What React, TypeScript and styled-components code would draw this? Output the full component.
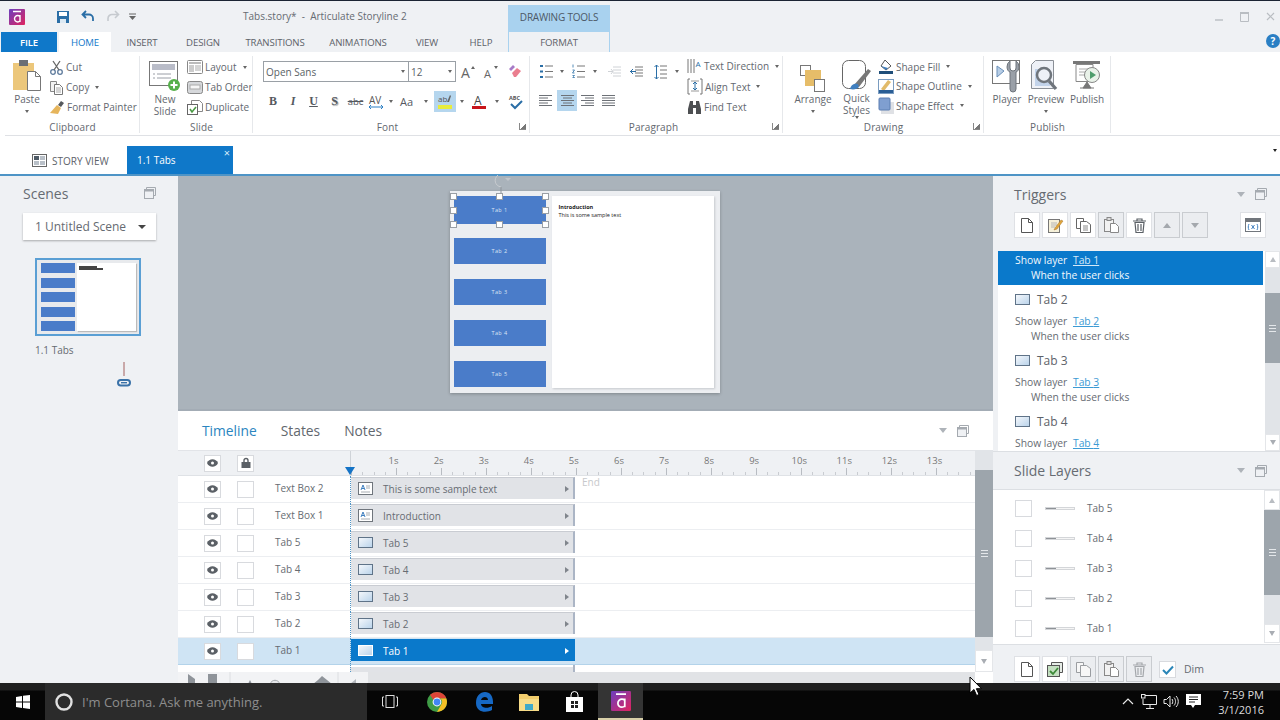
import React from 'react';
import styled, { createGlobalStyle } from 'styled-components';

const GlobalStyle = createGlobalStyle`
  html, body { margin: 0; padding: 0; background: #eff1f4; overflow: hidden; }
  * { box-sizing: border-box; }
  svg { display: block; flex: none; overflow: visible; }
`;

const font = '"Open Sans", "Liberation Sans", sans-serif';
const Blue = '#0f78c9';
const TextGrey = '#5a5f66';

const Shell = styled.div`
  width: 1280px;
  height: 720px;
  display: flex;
  flex-direction: column;
  overflow: hidden;
  position: relative;
  font-family: ${font};
  color: ${TextGrey};
  background: #eff1f4;
  border-top: 1px solid #1b2433;
`;

const TitleBar = styled.div`
  height: 31px;
  display: flex;
  align-items: flex-end;
  flex: none;
`;
const Qat = styled.div`
  width: 243px;
  height: 31px;
  display: flex;
  align-items: center;
  padding-left: 9px;
`;
const QatSlot = styled.div<{ $w: number }>`
  width: ${(p) => p.$w}px;
  display: flex;
  justify-content: center;
  flex: none;
`;
const DocTitle = styled.div`
  width: 265px;
  height: 31px;
  line-height: 31px;
  font-size: 10px;
  white-space: pre;
  color: #666b72;
`;
const ContextHead = styled.div`
  width: 102px;
  height: 27px;
  background: #a9d2ef;
  text-align: center;
  line-height: 24px;
  font-size: 10px;
  letter-spacing: -0.2px;
  color: #4c5866;
`;
const WinControls = styled.div`
  margin-left: auto;
  height: 31px;
  display: flex;
  align-items: center;
  gap: 17px;
  padding-right: 5px;
`;

const TabsRow = styled.div`
  height: 20px;
  display: flex;
  flex: none;
  padding-left: 1px;
  position: relative;
`;
const RibbonTab = styled.div<{ $w: number; $kind?: 'file' | 'active' | 'format' }>`
  width: ${(p) => p.$w}px;
  text-align: center;
  line-height: 21px;
  font-size: 9.6px;
  letter-spacing: -0.1px;
  margin-left: ${(p) => (p.$kind === 'active' ? '2px' : p.$kind === 'format' ? '1px' : '0')};
  background: ${(p) => (p.$kind === 'file' ? Blue : p.$kind === 'active' ? '#fff' : 'transparent')};
  color: ${(p) => (p.$kind === 'file' ? '#fff' : p.$kind === 'active' ? Blue : '#5d6269')};
  font-weight: ${(p) => (p.$kind === 'file' ? 600 : 400)};
  border-left: ${(p) => (p.$kind === 'format' ? '1px solid #a9d2ef' : '0')};
  border-right: ${(p) => (p.$kind === 'format' ? '1px solid #a9d2ef' : '0')};
`;
const HelpDot = styled.div`
  margin-left: auto;
  margin-top: 2px;
  width: 14px;
  height: 14px;
  border-radius: 50%;
  background: #2a7fc4;
  color: #fff;
  font-size: 10px;
  font-weight: 700;
  line-height: 14px;
  text-align: center;
`;

const Ribbon = styled.div`
  height: 84px;
  flex: none;
  background: #fff;
  display: flex;
  padding-left: 5px;
  position: relative;
  &::after {
    content: '';
    position: absolute;
    left: 5px;
    right: 0;
    bottom: 0;
    height: 1px;
    background: #dfe1e5;
  }
`;
const Group = styled.div<{ $w: number }>`
  width: ${(p) => p.$w}px;
  height: 83px;
  display: flex;
  flex-direction: column;
  position: relative;
  flex: none;
  &::after {
    content: '';
    position: absolute;
    right: 0;
    top: 4px;
    bottom: 2px;
    width: 1px;
    background: #e6e8eb;
  }
`;
const GroupBody = styled.div<{ $pl?: number; $gap?: number }>`
  height: 67px;
  display: flex;
  padding-left: ${(p) => p.$pl ?? 0}px;
  gap: ${(p) => p.$gap ?? 0}px;
`;
const GroupLabel = styled.div<{ $shift?: number }>`
  height: 16px;
  line-height: 17px;
  text-align: center;
  font-size: 10px;
  letter-spacing: 0.1px;
  color: #63686f;
  transform: translateX(${(p) => p.$shift ?? 0}px);
`;
const Launcher = styled.div`
  position: absolute;
  right: 4px;
  bottom: 5px;
  width: 7px;
  height: 7px;
  border-left: 1px solid #888;
  border-bottom: 1px solid #888;
  background: linear-gradient(135deg, transparent 55%, #777 55%);
`;
const BigButton = styled.div<{ $w: number }>`
  width: ${(p) => p.$w}px;
  display: flex;
  flex-direction: column;
  align-items: center;
  padding-top: 7px;
  font-size: 10px;
  line-height: 12px;
  text-align: center;
  color: #63686f;
  flex: none;
`;
const BigIcon = styled.div`
  height: 33px;
  margin-bottom: 1px;
  display: flex;
  align-items: flex-end;
  justify-content: center;
`;
const Caret = styled.span`
  display: inline-block;
  width: 0;
  height: 0;
  border-left: 2.5px solid transparent;
  border-right: 2.5px solid transparent;
  border-top: 3px solid #666;
  vertical-align: middle;
  flex: none;
`;
const BigCaret = styled(Caret)`
  margin-top: 5px;
`;
const SmallColumn = styled.div<{ $top?: number; $rowH?: number }>`
  display: flex;
  flex-direction: column;
  padding-top: ${(p) => p.$top ?? 5}px;
  & > * {
    height: ${(p) => p.$rowH ?? 20}px;
  }
`;
const SmallButton = styled.div`
  display: flex;
  align-items: center;
  gap: 2px;
  font-size: 10px;
  color: #63686f;
  white-space: nowrap;
`;
const SmallCaret = styled(Caret)`
  margin-left: 4px;
`;
const FontColumn = styled.div`
  display: flex;
  flex-direction: column;
  padding: 9px 0 0 6px;
  gap: 9px;
`;
const FontRow = styled.div`
  display: flex;
  align-items: center;
  height: 21px;
`;
const Combo = styled.div<{ $w: number }>`
  width: ${(p) => p.$w}px;
  height: 21px;
  border: 1px solid #9aa0a6;
  margin-right: -1px;
  display: flex;
  align-items: center;
  justify-content: space-between;
  padding: 0 3px 0 2px;
  font-size: 10px;
  color: #5a5f66;
  flex: none;
`;
const Slot = styled.div<{ $w: number; $on?: boolean }>`
  width: ${(p) => p.$w}px;
  height: 21px;
  flex: none;
  display: flex;
  align-items: center;
  justify-content: center;
  background: ${(p) => (p.$on ? '#b5d6ee' : 'transparent')};
  font-size: 11px;
  color: #55595f;
`;
const Bold = styled.span<{ $under?: boolean; $italic?: boolean; $shadow?: boolean }>`
  font-family: "Liberation Serif", serif;
  font-weight: 700;
  font-size: 12px;
  font-style: ${(p) => (p.$italic ? 'italic' : 'normal')};
  text-decoration: ${(p) => (p.$under ? 'underline' : 'none')};
  text-shadow: ${(p) => (p.$shadow ? '1px 1px 1px #999' : 'none')};
`;
const Strike = styled.span`
  font-size: 9.5px;
  text-decoration: line-through;
`;
const ParaColumn = styled.div`
  width: 157px;
  flex: none;
  display: flex;
  flex-direction: column;
  padding: 9px 0 0 9px;
  gap: 8px;
`;

const DocRow = styled.div`
  height: 40px;
  flex: none;
  background: #fff;
  display: flex;
  align-items: flex-end;
  border-bottom: 2px solid #4e94c6;
  position: relative;
`;
const StoryTab = styled.div`
  width: 127px;
  height: 27px;
  padding-left: 32px;
  display: flex;
  align-items: center;
  gap: 5px;
  font-size: 10px;
  color: #5d6269;
`;
const SlideTab = styled.div`
  width: 106px;
  height: 28px;
  background: ${Blue};
  color: #fff;
  font-size: 10px;
  line-height: 28px;
  padding-left: 10px;
  position: relative;
`;
const TabClose = styled.span`
  position: absolute;
  right: 3px;
  top: -7px;
  font-size: 11px;
  color: #d8ecfa;
`;
const DocMenu = styled.div`
  margin-left: auto;
  margin-right: 3px;
  margin-bottom: 14px;
`;
const DocCaret = styled(Caret)`
  border-top-color: #222;
`;

const Main = styled.div`
  flex: 1;
  display: flex;
  min-height: 0;
`;

const ScenesPanel = styled.div`
  width: 178px;
  flex: none;
  padding: 6px 22px 0 23px;
  display: flex;
  flex-direction: column;
`;
const PanelHead = styled.div`
  display: flex;
  align-items: center;
  justify-content: space-between;
  font-size: 14px;
  color: #666b72;
  height: 22px;
`;
const PanelTools = styled.div`
  display: flex;
  align-items: center;
  gap: 10px;
`;
const TimelineTools = styled(PanelTools)`
  margin-left: auto;
`;
const SceneSelect = styled.div`
  height: 27px;
  width: 133px;
  margin-top: 9px;
  background: #fff;
  box-shadow: 0 1px 2px rgba(0, 0, 0, 0.3);
  display: flex;
  align-items: center;
  justify-content: space-between;
  padding: 0 10px 0 12px;
  font-size: 12px;
  color: #666b72;
`;
const SelectCaret = styled(Caret)`
  border-left-width: 4px;
  border-right-width: 4px;
  border-top: 4px solid #444;
`;
const Thumb = styled.div`
  width: 106px;
  height: 78px;
  margin: 18px 0 0 12px;
  border: 2px solid #5a9fd4;
  background: #e8eaed;
  padding: 3px 3px 3px 4px;
  display: flex;
  gap: 2px;
`;
const ThumbTabs = styled.div`
  width: 34px;
  display: flex;
  flex-direction: column;
  justify-content: space-between;
`;
const ThumbTab = styled.div`
  height: 10px;
  background: #4a7cc9;
`;
const ThumbPage = styled.div`
  flex: 1;
  background: #fff;
  padding: 3px 2px;
  box-shadow: 1px 1px 1px #bbb;
`;
const ThumbText = styled.div<{ $w: number }>`
  width: ${(p) => p.$w}px;
  height: 2px;
  background: #444;
`;
const ThumbLabel = styled.div`
  margin: 7px 0 0 12px;
  font-size: 10px;
  color: #666b72;
`;
const LinkMark = styled.div`
  margin: 5px 0 0 94px;
`;

const Center = styled.div`
  width: 815px;
  flex: none;
  display: flex;
  flex-direction: column;
  min-height: 0;
`;
const Stage = styled.div`
  height: 235px;
  flex: none;
  background: #aab3bb;
  border-bottom: 2px solid #a3acb5;
  display: flex;
  justify-content: center;
  padding: 15px 2px 0 0;
`;
const SlideSheet = styled.div`
  width: 270px;
  height: 202px;
  background: #eceef1;
  box-shadow: 0 1px 3px rgba(0, 0, 0, 0.25);
  padding: 5px 6px 5px 4px;
  display: flex;
  gap: 6px;
  position: relative;
`;
const SlideTabs = styled.div`
  width: 92px;
  display: flex;
  flex-direction: column;
  gap: 15px;
`;
const SlideButton = styled.div<{ $first?: boolean }>`
  height: ${(p) => (p.$first ? 28 : 26)}px;
  margin-bottom: ${(p) => (p.$first ? -1 : 0)}px;
  background: #4a7cc9;
  color: #dbe5f5;
  font-size: 5.5px;
  display: flex;
  align-items: center;
  justify-content: center;
  letter-spacing: 0.4px;
  position: relative;
`;
const Handle = styled.span<{ $x: number; $y: number }>`
  position: absolute;
  left: ${(p) => p.$x}%;
  top: ${(p) => p.$y}%;
  width: 7px;
  height: 7px;
  margin: -3.5px 0 0 -3.5px;
  background: #fff;
  border: 1.5px solid #9a9fa5;
`;
const RotateMark = styled.div`
  position: absolute;
  left: 42px;
  top: -17px;
`;
const SlidePage = styled.div`
  flex: 1;
  background: #fff;
  box-shadow: 1px 1px 2px #c6c9cd;
  padding: 7px;
  font-size: 5.5px;
  line-height: 8px;
  color: #222;
`;
const SlideStrong = styled.div`
  font-weight: 700;
`;

const Timeline = styled.div`
  flex: 1;
  display: flex;
  flex-direction: column;
  background: #fff;
  min-height: 0;
  overflow: hidden;
`;
const TimelineTabs = styled.div`
  height: 39px;
  flex: none;
  display: flex;
  align-items: center;
  padding: 0 24px 0 24px;
  gap: 24px;
`;
const TimelineTab = styled.div<{ $on?: boolean }>`
  font-size: 13.8px;
  color: ${(p) => (p.$on ? '#2a85c0' : '#62676e')};
`;
const TimelineBody = styled.div`
  flex: 1;
  display: flex;
  min-height: 0;
`;
const TimelineGrid = styled.div`
  width: 797px;
  flex: none;
  display: flex;
  flex-direction: column;
`;
const RulerRow = styled.div`
  height: 26px;
  flex: none;
  display: flex;
  background: #eff1f4;
  border-top: 1px solid #e2e4e8;
  border-bottom: 1px solid #dfe2e6;
`;
const LayerCols = styled.div`
  width: 172px;
  flex: none;
  display: flex;
  align-items: center;
  padding-left: 26px;
  font-size: 10px;
  color: #666b72;
`;
const ToggleBox = styled.div`
  width: 17px;
  height: 17px;
  border: 1px solid #d8dade;
  background: #fff;
  display: flex;
  align-items: center;
  justify-content: center;
  flex: none;
`;
const LockBox = styled(ToggleBox)`
  margin-left: 16px;
`;
const LayerName = styled.div`
  margin: 0 0 2px 21px;
`;
const Ruler = styled.div`
  flex: 1;
  position: relative;
  display: flex;
  padding-left: 20px;
  border-left: 1px solid #cfd3d8;
  font-size: 9.5px;
  color: #777;
  background-image:
    repeating-linear-gradient(90deg, #b8bcc2 0 1px, transparent 1px 45px),
    repeating-linear-gradient(90deg, #c9ccd1 0 1px, transparent 1px 11.25px);
  background-size: 100% 7px, 100% 3px;
  background-position: 0 100%, 0 100%;
  background-repeat: no-repeat;
`;
const RulerMark = styled.div`
  width: 45.08px;
  flex: none;
  text-align: center;
  padding-top: 3px;
  line-height: 13px;
`;
const Playhead = styled.div`
  position: absolute;
  left: -6px;
  bottom: 0;
  width: 0;
  height: 0;
  border-left: 5.5px solid transparent;
  border-right: 5.5px solid transparent;
  border-top: 8px solid #1473c6;
`;
const Row = styled.div<{ $on?: boolean }>`
  height: 27px;
  flex: none;
  display: flex;
  background: ${(p) => (p.$on ? '#cfe4f4' : '#fff')};
  border-bottom: 1px solid ${(p) => (p.$on ? '#b3d3ea' : '#eceef1')};
`;
const Track = styled.div`
  flex: 1;
  position: relative;
  border-left: 1px dotted #4e94c6;
  display: flex;
  align-items: flex-start;
  padding-top: 1px;
`;
const EndMark = styled.span`
  position: absolute;
  left: 231px;
  top: -1px;
  font-size: 10px;
  color: #c7c9cc;
`;
const Bar = styled.div<{ $on?: boolean }>`
  width: 224px;
  height: 22px;
  background: ${(p) => (p.$on ? '#0a79cb' : '#e1e3e7')};
  border-top: 1px solid ${(p) => (p.$on ? '#0a79cb' : '#c9ccd2')};
  border-right: 2px solid ${(p) => (p.$on ? '#0a79cb' : '#abb5c5')};
  display: flex;
  align-items: center;
  padding: 0 4px 0 7px;
  color: ${(p) => (p.$on ? '#fff' : '#676c73')};
  font-size: 10px;
  gap: 10px;
`;
const BarArrow = styled.span<{ $on?: boolean }>`
  margin-left: auto;
  width: 0;
  height: 0;
  border-top: 3.5px solid transparent;
  border-bottom: 3.5px solid transparent;
  border-left: 4px solid ${(p) => (p.$on ? '#fff' : '#80858c')};
`;
const StubRow = styled.div`
  height: 7px;
  flex: none;
  display: flex;
`;
const StubBar = styled.div`
  margin-left: 172px;
  width: 225px;
  border-left: 1px dotted #4e94c6;
  border-right: 2px solid #abb5c5;
  background: linear-gradient(#fff 2px, #e1e3e7 2px);
`;
const TimelineFoot = styled.div`
  flex: 1;
  display: flex;
  min-height: 12px;
`;
const FootTools = styled.div`
  width: 190px;
  flex: none;
  background: #f2f3f5;
`;
const FootTrack = styled.div`
  flex: 1;
  background: #e1e3e6;
`;

const Scroll = styled.div<{ $w: number }>`
  width: ${(p) => p.$w}px;
  flex: none;
  display: flex;
  flex-direction: column;
  background: #e1e4e8;
`;
const ScrollArrow = styled.div<{ $h: number; $up?: boolean }>`
  height: ${(p) => p.$h}px;
  flex: none;
  background: #fff;
  border: 1px solid #e4e6e9;
  display: flex;
  align-items: center;
  justify-content: center;
  &::after {
    content: '';
    width: 0;
    height: 0;
    border-left: 3.5px solid transparent;
    border-right: 3.5px solid transparent;
    ${(p) => (p.$up ? 'border-bottom: 5px solid #b9bdc2;' : 'border-top: 5px solid #a9adb3;')}
  }
`;
const ScrollGap = styled.div<{ $h: number }>`
  height: ${(p) => p.$h}px;
  flex: none;
`;
const ScrollEnd = styled.div`
  flex: 1;
  background: #fff;
`;
const ScrollThumb = styled.div<{ $h: number }>`
  height: ${(p) => p.$h}px;
  flex: none;
  background: #9da5ac;
  display: flex;
  align-items: center;
  justify-content: center;
  &::after {
    content: '';
    width: 7px;
    height: 5px;
    border-top: 1px solid #e4e7ea;
    border-bottom: 1px solid #e4e7ea;
    background: linear-gradient(#e4e7ea, #e4e7ea) center / 100% 1px no-repeat;
  }
`;

const RightPanel = styled.div`
  width: 287px;
  flex: none;
  display: flex;
  flex-direction: column;
  background: #eff1f4;
  min-height: 0;
`;
const RightHead = styled(PanelHead)`
  padding: 0 13px 0 21px;
  height: 38px;
  flex: none;
`;
const TriggersHead = styled(RightHead)`
  height: 36px;
`;
const ToolRow = styled.div`
  height: 39px;
  flex: none;
  display: flex;
  padding: 0 0 0 21px;
  gap: 2px;
`;
const ToolButton = styled.div<{ $off?: boolean; $push?: number }>`
  width: 26px;
  height: 26px;
  background: ${(p) => (p.$off ? '#ebedf0' : '#fff')};
  border: 1px solid ${(p) => (p.$off ? '#c9ccd0' : '#dfe1e5')};
  display: flex;
  align-items: center;
  justify-content: center;
  margin-left: ${(p) => p.$push ?? 0}px;
  flex: none;
`;
const TriggerBody = styled.div`
  height: 200px;
  flex: none;
  display: flex;
  padding-left: 5px;
`;
const TriggerList = styled.div`
  width: 267px;
  background: #fff;
  overflow: hidden;
  font-size: 10.3px;
  color: #666b72;
`;
const TriggerItem = styled.div<{ $on?: boolean }>`
  height: 34px;
  padding: 2px 0 0 17px;
  margin-right: 2px;
  line-height: 15px;
  background: ${(p) => (p.$on ? '#0a79cb' : 'transparent')};
  color: ${(p) => (p.$on ? '#f2f8fd' : '#666b72')};
`;
const TriggerLink = styled.span<{ $on?: boolean }>`
  text-decoration: underline;
  color: ${(p) => (p.$on ? '#d5e9f8' : '#3b9ad4')};
  margin-left: 3px;
`;
const TriggerWhen = styled.div`
  padding-left: 16px;
`;
const TriggerGroup = styled.div`
  height: 27px;
  display: flex;
  align-items: center;
  padding: 2px 0 0 17px;
  gap: 7px;
  font-size: 12px;
  color: #5d6269;
`;
const LayersHead = styled(RightHead)`
  border-top: 1px solid #dcdfe3;
  height: 39px;
  border-bottom: 1px solid #dcdfe3;
`;
const LayersBody = styled.div`
  height: 155px;
  flex: none;
  display: flex;
  padding-left: 4px;
  background: #fff;
  border-bottom: 1px solid #dcdfe3;
`;
const LayersList = styled.div`
  width: 267px;
  padding: 3px 0 0 18px;
`;
const LayerRow = styled.div`
  height: 30px;
  display: flex;
  align-items: center;
  font-size: 10px;
  color: #666b72;
`;
const LayerCheck = styled.div`
  width: 17px;
  height: 17px;
  background: #fff;
  border: 1px solid #d8dade;
  flex: none;
`;
const OpacityTrack = styled.div`
  width: 30px;
  height: 3px;
  margin: 0 12px 0 13px;
  border: 1px solid #d4d6d9;
  background: linear-gradient(90deg, #8e9297 0 10px, #f5f5f5 10px);
  flex: none;
`;
const LayersFoot = styled.div`
  flex: 1;
  display: flex;
  padding: 11px 0 0 21px;
  gap: 2px;
  align-items: flex-start;
`;
const DimCheck = styled(LayerCheck)`
  margin: 5px 6px 0 5px;
  display: flex;
  align-items: center;
  justify-content: center;
`;
const DimLabel = styled.span`
  font-size: 10.5px;
  line-height: 27px;
  color: #666b72;
`;

const Taskbar = styled.div`
  height: 37px;
  flex: none;
  background: linear-gradient(#1f1f1f 0 7px, #060606 8px);
  display: flex;
  align-items: center;
  position: relative;
  color: #e8e8e8;
`;
const StartSlot = styled.div`
  width: 45px;
  height: 37px;
  display: flex;
  align-items: center;
  justify-content: center;
`;
const CortanaBox = styled.div`
  width: 322px;
  height: 37px;
  background: #2b2b2b;
  display: flex;
  align-items: center;
  padding-left: 9px;
  gap: 8px;
  font-size: 13px;
  color: #8e8e8e;
`;
const TaskSlot = styled.div<{ $w: number; $active?: boolean }>`
  width: ${(p) => p.$w}px;
  height: 37px;
  flex: none;
  display: flex;
  align-items: center;
  justify-content: center;
  background: ${(p) => (p.$active ? '#343434' : 'transparent')};
  border-bottom: ${(p) => (p.$active ? '2px solid #d8cfa8' : '0')};
`;
const Tray = styled.div`
  margin-left: auto;
  display: flex;
  align-items: center;
  gap: 7px;
  padding-right: 16px;
`;
const Clock = styled.div`
  font-size: 11px;
  line-height: 15px;
  text-align: right;
  color: #dcdcdc;
  margin-left: 10px;
`;
const Pointer = styled.div`
  position: absolute;
  left: 969px;
  top: 675px;
`;

/* ---- icons ---- */
const AppLogo = ({ size = 16 }: { size?: number }) => (
  <svg width={size} height={size} viewBox="0 0 16 16">
    <defs>
      <linearGradient id="lg" x1="0" y1="0" x2="1" y2="1">
        <stop offset="0" stopColor="#6a3fc0" />
        <stop offset="1" stopColor="#e0245e" />
      </linearGradient>
    </defs>
    <rect width="16" height="16" rx="1" fill="url(#lg)" />
    <path d="M4 2.5h8M11 7.5a3.2 3.2 0 1 0 0 4.5M11 6v7" stroke="#fff" strokeWidth="1.4" fill="none" />
  </svg>
);
const SaveIcon = () => (
  <svg width="14" height="14" viewBox="0 0 14 14">
    <rect x="1" y="1" width="12" height="12" fill="#2a6ea6" />
    <rect x="3" y="2" width="8" height="4" fill="#fff" />
    <rect x="4" y="9" width="6" height="4" fill="#dce9f3" />
  </svg>
);
const UndoIcon = ({ color = '#2a6ea6' }: { color?: string }) => (
  <svg width="14" height="13" viewBox="0 0 14 13">
    <path d="M5 1L1.5 4.5 5 8M2 4.5h6a4 4 0 0 1 4 4V11" fill="none" stroke={color} strokeWidth="1.8" />
  </svg>
);
const RedoIcon = () => (
  <svg width="14" height="13" viewBox="0 0 14 13">
    <path d="M9 1l3.5 3.5L9 8M12 4.5H6a4 4 0 0 0-4 4V11" fill="none" stroke="#c6cacf" strokeWidth="1.6" />
  </svg>
);
const QatMenu = () => (
  <svg width="7" height="7" viewBox="0 0 7 7">
    <path d="M0 1h7" stroke="#666" />
    <path d="M0 3h7L3.5 7z" fill="#666" />
  </svg>
);
const PasteIcon = () => (
  <svg width="30" height="33" viewBox="0 0 30 33">
    <rect x="1" y="4" width="21" height="27" fill="#ecc77b" />
    <rect x="7" y="1" width="9" height="6" fill="#6b6f75" />
    <path d="M15.5 12.5h8l5 5v14h-13z" fill="#fff" stroke="#777" />
    <path d="M23.5 12.5v5h5" fill="none" stroke="#777" />
  </svg>
);
const CutIcon = () => (
  <svg width="15" height="15" viewBox="0 0 15 15">
    <circle cx="4" cy="12" r="2.3" fill="none" stroke="#5d7a9c" strokeWidth="1.3" />
    <circle cx="11" cy="12" r="2.3" fill="none" stroke="#5d7a9c" strokeWidth="1.3" />
    <path d="M5 10L11 1M10 10L4 1" stroke="#666" strokeWidth="1.3" />
  </svg>
);
const CopyIcon = () => (
  <svg width="15" height="15" viewBox="0 0 15 15">
    <path d="M1.5 1.5h6v10h-6z" fill="#f3f3f3" stroke="#888" />
    <path d="M5.5 4.5h5l3 3v7h-8z" fill="#fff" stroke="#777" />
    <path d="M7 8h5M7 10h5M7 12h5" stroke="#aaa" />
  </svg>
);
const BrushIcon = () => (
  <svg width="16" height="15" viewBox="0 0 16 15">
    <path d="M9 5l3-4 3 2-3 4z" fill="#55585c" />
    <path d="M1 13l7-8 4 3-3 6z" fill="#e6b55c" />
  </svg>
);
const NewSlideIcon = () => (
  <svg width="32" height="31" viewBox="0 0 32 31">
    <rect x=".5" y=".5" width="28" height="24" fill="#fff" stroke="#777" />
    <rect x="3" y="3" width="23" height="6" fill="#b9bcc8" />
    <path d="M4 13h2M8 13h14M4 17h2M8 17h14" stroke="#9a9ea6" />
    <circle cx="25" cy="24" r="6" fill="#57b04c" />
    <path d="M25 20.5v7M21.5 24h7" stroke="#fff" strokeWidth="2" />
  </svg>
);
const LayoutIcon = () => (
  <svg width="16" height="15" viewBox="0 0 16 15">
    <rect x=".5" y=".5" width="15" height="13" rx="1" fill="#fff" stroke="#888" />
    <rect x="2" y="2" width="12" height="2" fill="#bbb" />
    <rect x="2" y="5" width="5" height="7" fill="#ccc" />
    <path d="M8 6h6M8 8h6M8 10h6" stroke="#aaa" />
  </svg>
);
const TabOrderIcon = () => (
  <svg width="16" height="15" viewBox="0 0 16 15">
    <rect x=".5" y="1.5" width="15" height="12" rx="2" fill="#d6d8db" stroke="#888" />
    <rect x="3" y="5" width="10" height="4" fill="#f6f6f6" stroke="#aaa" />
  </svg>
);
const DuplicateIcon = () => (
  <svg width="16" height="15" viewBox="0 0 16 15">
    <path d="M4.5.5h8l3 3v8h-11z" fill="#fff" stroke="#888" />
    <rect x=".5" y="4.5" width="10" height="10" fill="#fff" stroke="#666" />
    <path d="M3 9l2 3 4-5" fill="none" stroke="#4a9a44" strokeWidth="1.6" />
  </svg>
);
const GrowA = ({ down }: { down?: boolean }) => (
  <svg width="17" height="17" viewBox="0 0 17 17">
    <text x="1" y="15" fontSize={down ? 11 : 14} fill="#666" fontFamily="Open Sans">A</text>
    <path d={down ? 'M11 3h4l-2 3z' : 'M11 6h4l-2-3z'} fill="#666" />
  </svg>
);
const EraserIcon = () => (
  <svg width="15" height="15" viewBox="0 0 15 15">
    <path d="M2 5l4-4 2 2-4 4z" fill="#a77bc7" />
    <path d="M5 9l5-5 4 3-5 6H7z" fill="#ea7e8f" />
  </svg>
);
const AvIcon = () => (
  <svg width="17" height="16" viewBox="0 0 17 16">
    <text x="1" y="10" fontSize="10" fill="#555" fontFamily="Open Sans">AV</text>
    <path d="M1 13h14M3 11l-2 2 2 2M13 11l2 2-2 2" fill="none" stroke="#2a7fc4" />
  </svg>
);
const HighlightIcon = () => (
  <svg width="16" height="17" viewBox="0 0 16 17">
    <text x="1" y="9" fontSize="8" fill="#555" fontFamily="Open Sans">ab</text>
    <path d="M10 9l3-7 1 1-2 6z" fill="#666" />
    <rect x="1" y="12" width="14" height="4" fill="#e8ec3c" />
  </svg>
);
const ColorAIcon = () => (
  <svg width="16" height="17" viewBox="0 0 16 17">
    <text x="3" y="12" fontSize="12" fill="#444" fontFamily="Open Sans">A</text>
    <rect x="1" y="13" width="14" height="3" fill="#c8151b" />
  </svg>
);
const SpellIcon = () => (
  <svg width="15" height="16" viewBox="0 0 15 16">
    <text x="0" y="6" fontSize="5.5" fontWeight="700" fill="#555" fontFamily="Open Sans">ABC</text>
    <path d="M2 10l4 4 7-7" fill="none" stroke="#2a6ea6" strokeWidth="2" />
  </svg>
);
const BulletsIcon = ({ numbered }: { numbered?: boolean }) => (
  <svg width="13" height="15" viewBox="0 0 13 15">
    <path d="M5 2h8M5 7.5h8M5 13h8" stroke="#777" />
    {numbered ? (
      <path d="M1 .5v3M.5 6h2l-2 3h2M.5 11.5h2l-1 1 1 1h-2" fill="none" stroke="#2a6ea6" strokeWidth=".8" />
    ) : (
      <path d="M0 2h3M0 7.5h3M0 13h3" stroke="#2a6ea6" strokeWidth="2" />
    )}
  </svg>
);
const IndentIcon = ({ off }: { off?: boolean }) => (
  <svg width="13" height="11" viewBox="0 0 13 11">
    <path d="M5 1h8M5 4h8M5 7h8M5 10h8" stroke={off ? '#cfd2d6' : '#777'} />
    <path d={off ? 'M0 5.5h5M3 3l2 2.5L3 8' : 'M0 5.5h6M3 3L.5 5.5 3 8'} fill="none" stroke={off ? '#cfd2d6' : '#2a6ea6'} />
  </svg>
);
const LineSpaceIcon = () => (
  <svg width="13" height="16" viewBox="0 0 13 16">
    <path d="M6 2h7M6 6h7M6 10h7M6 14h7" stroke="#777" />
    <path d="M2.5 1v14M.5 3l2-2 2 2M.5 13l2 2 2-2" fill="none" stroke="#2a6ea6" />
  </svg>
);
const AlignIcon = ({ mode }: { mode: 'l' | 'c' | 'r' | 'j' }) => {
  const w = [13, 9, 13, 9, 13];
  return (
    <svg width="13" height="11" viewBox="0 0 13 11">
      {w.map((n, i) => {
        const len = mode === 'j' ? 13 : n;
        const x = mode === 'l' || mode === 'j' ? 0 : mode === 'c' ? (13 - len) / 2 : 13 - len;
        return <path key={i} d={`M${x} ${0.5 + i * 2.5}h${len}`} stroke="#6d7177" />;
      })}
    </svg>
  );
};
const TextDirIcon = () => (
  <svg width="15" height="16" viewBox="0 0 15 16">
    <path d="M1 1v14M4 1v14M7 1v14" stroke="#777" />
    <text x="8.5" y="9" fontSize="8" fill="#2a6ea6" fontFamily="Open Sans">A</text>
  </svg>
);
const AlignTextIcon = () => (
  <svg width="16" height="17" viewBox="0 0 16 17">
    <path d="M3 1H1v15h2M13 1h2v15h-2" fill="none" stroke="#777" />
    <path d="M4 3h8M4 13h8" stroke="#999" />
    <path d="M8 5v7M6 6l2-2 2 2M6 10l2 2 2-2" fill="none" stroke="#2a6ea6" />
  </svg>
);
const BinocularIcon = () => (
  <svg width="15" height="13" viewBox="0 0 15 13">
    <path d="M3 0h3v4h3V0h3l2 8v5H9V7H6v6H1V8z" fill="#4d4f52" />
  </svg>
);
const ArrangeIcon = () => (
  <svg width="26" height="27" viewBox="0 0 26 27">
    <rect x=".5" y=".5" width="10" height="10" fill="#fff" stroke="#777" />
    <rect x="5" y="5" width="16" height="16" fill="#e6bd69" />
    <rect x="14.5" y="14.5" width="10" height="12" fill="#fff" stroke="#777" />
  </svg>
);
const QuickStylesIcon = () => (
  <svg width="30" height="31" viewBox="0 0 30 31">
    <rect x=".5" y=".5" width="23" height="28" rx="6" fill="#fff" stroke="#666" />
    <path d="M12 25l14-16 3 2-12 16z" fill="#777" />
    <path d="M8 29c1-5 5-6 8-5l1 3c-2 2-5 3-9 2z" fill="#3f7fbf" />
  </svg>
);
const FillIcon = () => (
  <svg width="16" height="16" viewBox="0 0 16 16">
    <path d="M7 1l6 6-5 4-5-4z" fill="#fff" stroke="#555" />
    <path d="M3 7l5 4 2-2z" fill="#3f7fbf" />
    <rect x="1" y="12" width="14" height="3" fill="#1f4e79" />
  </svg>
);
const OutlineIcon = () => (
  <svg width="16" height="16" viewBox="0 0 16 16">
    <rect x=".5" y="1.5" width="15" height="14" fill="#fff" stroke="#7a9cc0" />
    <path d="M3 11l7-9 3 2-7 9z" fill="#e2bb6a" />
    <rect x="1" y="12" width="14" height="3" fill="#2a5e95" />
  </svg>
);
const EffectIcon = () => (
  <svg width="16" height="17" viewBox="0 0 16 17">
    <rect x="3" y="5" width="13" height="12" fill="#dfe1e5" />
    <rect x="1" y="1" width="11" height="12" rx="1" fill="#7f9fd0" stroke="#5d7eb2" />
  </svg>
);
const PlayerIcon = () => (
  <svg width="31" height="32" viewBox="0 0 31 32">
    <rect x=".5" y=".5" width="27" height="23" fill="#fff" stroke="#777" />
    <path d="M5 6l7 5-7 6z" fill="#b8cee6" stroke="#6a8fb8" />
    <path d="M18 1v7a3 3 0 0 0 6 0V1a7 7 0 0 1 3 6c0 3-2 5-3 5v17a2.5 2.5 0 0 1-6 0V12c-1 0-3-2-3-5a7 7 0 0 1 3-6z" fill="#9aa0a8" stroke="#6f757c" />
  </svg>
);
const PreviewIcon = () => (
  <svg width="31" height="32" viewBox="0 0 31 32">
    <path d="M.5 4.5l4-4h18v28H.5z" fill="#eef1f7" stroke="#8a8f96" />
    <rect x="4" y="9" width="15" height="17" fill="#c2d3ea" />
    <circle cx="13" cy="15" r="7" fill="#eef1f7" stroke="#6f757c" strokeWidth="2.5" />
    <path d="M18 21l7 8" stroke="#6f757c" strokeWidth="3.4" />
  </svg>
);
const PublishIcon = () => (
  <svg width="30" height="32" viewBox="0 0 30 32">
    <rect x="1" y="1" width="27" height="3" fill="#777" />
    <path d="M4 4.5h17v17H4z" fill="#fff" stroke="#888" />
    <path d="M7 9h9M7 12h6M7 15h6" stroke="#aaa" />
    <circle cx="20" cy="15" r="7.5" fill="#e9f2e9" stroke="#888" />
    <path d="M18 11l6 4-6 4z" fill="#4e9d6c" />
    <path d="M8 28h14M15 22l-4 6h8z" fill="#777" stroke="#777" />
  </svg>
);
const StoryIcon = () => (
  <svg width="15" height="13" viewBox="0 0 15 13">
    <rect x=".5" y=".5" width="14" height="12" fill="#fff" stroke="#666" />
    <rect x="2" y="2" width="5" height="4" fill="#4e5a66" />
    <rect x="8" y="2" width="5" height="4" fill="#b9c0c8" />
    <rect x="2" y="7" width="5" height="4" fill="#b9c0c8" />
    <rect x="8" y="7" width="5" height="4" fill="#b9c0c8" />
  </svg>
);
const RestoreIcon = () => (
  <svg width="12" height="12" viewBox="0 0 12 12">
    <path d="M2.5 2.5v-2h9v8h-2" fill="none" stroke="#a5aab0" />
    <rect x=".5" y="2.5" width="9" height="9" fill="#eff1f4" stroke="#a5aab0" />
    <rect x=".5" y="2.5" width="9" height="2" fill="#a5aab0" />
  </svg>
);
const PanelCaret = styled(Caret)`
  border-left-width: 4px;
  border-right-width: 4px;
  border-top: 5px solid #aeb3b9;
`;
const LinkIcon = () => (
  <svg width="14" height="25" viewBox="0 0 14 25">
    <path d="M7 0v14" stroke="#a3605e" />
    <rect x="1" y="18" width="12" height="5.5" rx="2.7" fill="none" stroke="#3a72a8" strokeWidth="2" />
    <path d="M4 20.7h6" stroke="#3a72a8" strokeWidth="1.4" />
  </svg>
);
const RotateIcon = () => (
  <svg width="22" height="20" viewBox="0 0 22 20">
    <path d="M6 1C1 5 3 12 9 13" fill="none" stroke="#c8ccd0" />
    <path d="M9 13v6" stroke="#8f959b" />
    <path d="M13 4h6l-3 3z" fill="#c2c6cb" />
  </svg>
);
const EyeIcon = () => (
  <svg width="11" height="8" viewBox="0 0 11 8">
    <path d="M0 4c2-5 9-5 11 0-2 5-9 5-11 0z" fill="#5b6066" />
    <circle cx="5.5" cy="4" r="1.5" fill="#fff" />
  </svg>
);
const LockIcon = () => (
  <svg width="10" height="10" viewBox="0 0 10 10">
    <path d="M3 4V2.5a2 2 0 0 1 4 0V4" fill="none" stroke="#5b6066" strokeWidth="1.4" />
    <rect x=".5" y="4" width="9" height="6" fill="#5b6066" />
  </svg>
);
const TextBoxIcon = () => (
  <svg width="15" height="13" viewBox="0 0 15 13">
    <rect x=".5" y=".5" width="14" height="12" fill="#fff" stroke="#6f757c" />
    <path d="M3 8l2-5 2 5M4 6.5h2" fill="none" stroke="#3f7fbf" />
    <path d="M8 4h4M8 6h4M3 10h9" stroke="#a8adb3" />
  </svg>
);
const ShapeIcon = ({ bright }: { bright?: boolean }) => (
  <svg width="15" height="11" viewBox="0 0 15 11">
    <defs>
      <linearGradient id="sg" x1="0" y1="0" x2="1" y2="1">
        <stop offset="0" stopColor="#f7f9fc" />
        <stop offset="1" stopColor="#b8d2ea" />
      </linearGradient>
    </defs>
    <rect x=".5" y=".5" width="14" height="10" fill="url(#sg)" stroke={bright ? '#fff' : '#5f7388'} />
  </svg>
);
const PageIcon = () => (
  <svg width="12" height="15" viewBox="0 0 12 15">
    <path d="M.5.5h7l4 4v10H.5z" fill="#fff" stroke="#555" />
    <path d="M7.5.5v4h4" fill="none" stroke="#555" />
  </svg>
);
const EditIcon = () => (
  <svg width="15" height="15" viewBox="0 0 15 15">
    <rect x=".5" y="1.5" width="11" height="13" fill="#f6f1da" stroke="#777" />
    <path d="M3 5h6M3 7h6M3 9h4" stroke="#b5b5b5" />
    <path d="M7 10l6-8 2 1-6 8-3 1z" fill="#e0a63a" stroke="#a8742a" strokeWidth=".5" />
  </svg>
);
const DocsIcon = () => (
  <svg width="15" height="15" viewBox="0 0 15 15">
    <path d="M.5.5h7v10h-7z" fill="#fff" stroke="#666" />
    <path d="M4.5 3.5h6l4 3v8h-10z" fill="#fff" stroke="#666" />
    <path d="M7 8h5M7 10h5M7 12h5" stroke="#888" />
  </svg>
);
const CopyPlain = ({ faint }: { faint?: boolean }) => (
  <svg width="15" height="15" viewBox="0 0 15 15">
    <path d="M.5.5h7v10h-7z" fill="#f7f7f7" stroke={faint ? '#9a9da1' : '#777'} />
    <path d="M4.5 3.5h6l4 3v8h-10z" fill="#f7f7f7" stroke={faint ? '#9a9da1' : '#777'} />
  </svg>
);
const ClipIcon = () => (
  <svg width="15" height="16" viewBox="0 0 15 16">
    <rect x=".5" y="2.5" width="9" height="12" fill="#f2f2f2" stroke="#888" />
    <rect x="3" y=".5" width="4" height="3" fill="#ddd" stroke="#888" />
    <path d="M6.5 6.5h5l3 3v6h-8z" fill="#fff" stroke="#888" />
  </svg>
);
const TrashIcon = ({ faint }: { faint?: boolean }) => (
  <svg width="13" height="15" viewBox="0 0 13 15">
    <path d="M0 3h13M4 3V1h5v2" fill="none" stroke={faint ? '#a5a8ac' : '#5b6066'} strokeWidth="1.2" />
    <path d="M2 4.5l1 10h7l1-10zM5 6v7M8 6v7" fill="none" stroke={faint ? '#a5a8ac' : '#5b6066'} strokeWidth="1.2" />
  </svg>
);
const Tri = styled.span<{ $up?: boolean }>`
  width: 0;
  height: 0;
  border-left: 4px solid transparent;
  border-right: 4px solid transparent;
  ${(p) => (p.$up ? 'border-bottom: 5px solid #a4a8ad;' : 'border-top: 5px solid #a4a8ad;')}
`;
const VarIcon = () => (
  <svg width="16" height="14" viewBox="0 0 16 14">
    <rect x=".5" y=".5" width="15" height="13" fill="#fff" stroke="#71767c" />
    <rect x="1" y="1" width="14" height="3" fill="#71767c" />
    <path d="M4 6C3 8 3 10 4 12M12 6c1 2 1 4 0 6M6.5 7l3 4M9.5 7l-3 4" fill="none" stroke="#3f7fbf" />
  </svg>
);
const LayerDupIcon = () => (
  <svg width="16" height="15" viewBox="0 0 16 15">
    <path d="M4.5 3V.5h11v10H13" fill="#e6ece6" stroke="#555" />
    <rect x=".5" y="3.5" width="12" height="11" fill="#c4dfc1" stroke="#555" />
    <path d="M3 9l3 3 5-6" fill="none" stroke="#3d8a38" strokeWidth="1.8" />
  </svg>
);
const CheckIcon = () => (
  <svg width="12" height="10" viewBox="0 0 12 10">
    <path d="M1 5l3.5 3.5L11 1.5" fill="none" stroke="#2a86b8" strokeWidth="2" />
  </svg>
);
const FootIcons = () => (
  <svg width="190" height="12" viewBox="0 0 190 12">
    <path d="M10 2l7 5v5h-7z" fill="#8f949a" />
    <rect x="30" y="2" width="9" height="10" fill="#8f949a" />
    <path d="M52 0v12" stroke="#dcdee1" />
    <path d="M70 12l2-4 2 4z" fill="#8f949a" />
    <path d="M84 12h8c2-5 8-5 10 0h9" fill="#e4e6e9" stroke="#a6aaaf" />
    <path d="M135 12l5-4 4-4 5 4 5 4z" fill="#8f949a" />
    <path d="M172 12l6-5v5z" fill="#b3b7bc" />
    <path d="M160 0v12" stroke="#dcdee1" />
  </svg>
);
const WindowsIcon = () => (
  <svg width="14" height="14" viewBox="0 0 14 14">
    <path d="M0 2l6-1v5.6H0zM7 .8L14 0v6.6H7zM0 7.4h6V13l-6-1zM7 7.4h7V14l-7-1z" fill="#fff" />
  </svg>
);
const TaskViewIcon = () => (
  <svg width="16" height="13" viewBox="0 0 16 13">
    <rect x="4" y=".5" width="8" height="12" fill="none" stroke="#ddd" />
    <path d="M2 2H.5v9H2M14 2h1.5v9H14" fill="none" stroke="#ddd" />
  </svg>
);
const ChromeIcon = () => (
  <svg width="20" height="20" viewBox="0 0 20 20">
    <circle cx="10" cy="10" r="10" fill="#3f9c46" />
    <path d="M10 0a10 10 0 0 1 9.4 6.6H10a3.5 3.5 0 0 0-3.3 2L3 2.8A10 10 0 0 1 10 0z" fill="#dc4437" />
    <path d="M19.4 6.6A10 10 0 0 1 10 20l4-7a4 4 0 0 0-1-6.4z" fill="#f6c026" />
    <circle cx="10" cy="10" r="4.4" fill="#fff" />
    <circle cx="10" cy="10" r="3.4" fill="#4286f4" />
  </svg>
);
const EdgeIcon = () => (
  <svg width="18" height="20" viewBox="0 0 18 20">
    <path d="M1 11C1 4 5 0 10 0c5 0 8 4 8 10v2H6c0 4 7 5 11 2v4c-5 3-16 3-16-7zM6 8h7c0-4-6-4-7 0z" fill="#1668c4" />
  </svg>
);
const FolderIcon = () => (
  <svg width="20" height="18" viewBox="0 0 20 18">
    <path d="M0 1h8l2 2h10v15H0z" fill="#f2cd6c" />
    <path d="M0 6h20v12H0z" fill="#f7dc88" />
    <rect x="6" y="11" width="8" height="6" fill="#3fa9c9" />
  </svg>
);
const StoreIcon = () => (
  <svg width="17" height="20" viewBox="0 0 17 20">
    <path d="M5 5V3a3.5 3.5 0 0 1 7 0v2" fill="none" stroke="#fff" />
    <path d="M0 5h17v15H0z" fill="#fff" />
    <path d="M5 9h3v3H5zM9 9h3v3H9zM5 13h3v3H5zM9 13h3v3H9z" fill="#222" />
  </svg>
);
const NetworkIcon = () => (
  <svg width="16" height="15" viewBox="0 0 16 15">
    <path d="M4 1.5h11.5v9H2V5M9 11v3M5 14.5h8" fill="none" stroke="#e8e8e8" />
    <rect x=".5" y=".5" width="3.5" height="3.5" fill="none" stroke="#e8e8e8" />
  </svg>
);
const SpeakerIcon = () => (
  <svg width="15" height="13" viewBox="0 0 15 13">
    <path d="M0 4.5h2.5L6 1v11L2.5 8.5H0z" fill="none" stroke="#e8e8e8" />
    <path d="M8 4c1 1 1 4 0 5M10 2.5c2 2 2 6 0 8M12 1c3 3 3 8 0 11" fill="none" stroke="#e8e8e8" />
  </svg>
);
const ChatIcon = () => (
  <svg width="15" height="15" viewBox="0 0 15 15">
    <path d="M0 0h15v11H9l-2 3-2-3H0z" fill="#fff" />
    <path d="M3 3h9M3 5.5h9M3 8h6" stroke="#222" />
  </svg>
);

const PointerIcon = () => (
  <svg width="13" height="21" viewBox="0 0 13 21">
    <path d="M1 1v16l4-3.5 2.6 6 2.4-1-2.6-5.8H12.5z" fill="#fff" stroke="#000" />
  </svg>
);

const layers: { name: string; label: string; text?: boolean }[] = [
  { name: 'Text Box 2', label: 'This is some sample text', text: true },
  { name: 'Text Box 1', label: 'Introduction', text: true },
  { name: 'Tab 5', label: 'Tab 5' },
  { name: 'Tab 4', label: 'Tab 4' },
  { name: 'Tab 3', label: 'Tab 3' },
  { name: 'Tab 2', label: 'Tab 2' },
  { name: 'Tab 1', label: 'Tab 1' },
];

const handles = [
  [0, 0], [50, 0], [100, 0],
  [0, 50], [100, 50],
  [0, 100], [50, 100], [100, 100],
];

const RibbonPanel = () => (
  <Ribbon>
    <Group $w={135}>
      <GroupBody>
        <BigButton $w={44}>
          <BigIcon><PasteIcon /></BigIcon>
          Paste
          <BigCaret />
        </BigButton>
        <SmallColumn>
          <SmallButton><CutIcon />Cut</SmallButton>
          <SmallButton><CopyIcon />Copy<SmallCaret /></SmallButton>
          <SmallButton><BrushIcon />Format Painter</SmallButton>
        </SmallColumn>
      </GroupBody>
      <GroupLabel>Clipboard</GroupLabel>
    </Group>
    <Group $w={113}>
      <GroupBody $pl={3}>
        <BigButton $w={44}>
          <BigIcon><NewSlideIcon /></BigIcon>
          New<br />Slide
        </BigButton>
        <SmallColumn>
          <SmallButton><LayoutIcon />Layout<SmallCaret /></SmallButton>
          <SmallButton><TabOrderIcon />Tab Order</SmallButton>
          <SmallButton><DuplicateIcon />Duplicate</SmallButton>
        </SmallColumn>
      </GroupBody>
      <GroupLabel $shift={5}>Slide</GroupLabel>
    </Group>
    <Group $w={277}>
      <GroupBody $pl={4}>
        <FontColumn>
          <FontRow>
            <Combo $w={146}>Open Sans<Caret /></Combo>
            <Combo $w={48}>12<Caret /></Combo>
            <Slot $w={26}><GrowA /></Slot>
            <Slot $w={20}><GrowA down /></Slot>
            <Slot $w={26}><EraserIcon /></Slot>
          </FontRow>
          <FontRow>
            <Slot $w={20}><Bold>B</Bold></Slot>
            <Slot $w={20}><Bold $italic>I</Bold></Slot>
            <Slot $w={21}><Bold $under>U</Bold></Slot>
            <Slot $w={21}><Bold $shadow>S</Bold></Slot>
            <Slot $w={21}><Strike>abc</Strike></Slot>
            <Slot $w={20}><AvIcon /></Slot>
            <Slot $w={10}><Caret /></Slot>
            <Slot $w={21}>Aa</Slot>
            <Slot $w={17}><Caret /></Slot>
            <Slot $w={22} $on><HighlightIcon /></Slot>
            <Slot $w={12}><Caret /></Slot>
            <Slot $w={22}><ColorAIcon /></Slot>
            <Slot $w={14}><Caret /></Slot>
            <Slot $w={24}><SpellIcon /></Slot>
          </FontRow>
        </FontColumn>
      </GroupBody>
      <GroupLabel $shift={-4}>Font</GroupLabel>
      <Launcher />
    </Group>
    <Group $w={253}>
      <GroupBody>
        <ParaColumn>
          <FontRow>
            <Slot $w={14}><BulletsIcon /></Slot>
            <Slot $w={18}><Caret /></Slot>
            <Slot $w={14}><BulletsIcon numbered /></Slot>
            <Slot $w={20}><Caret /></Slot>
            <Slot $w={18}><IndentIcon off /></Slot>
            <Slot $w={26}><IndentIcon /></Slot>
            <Slot $w={22}><LineSpaceIcon /></Slot>
            <Slot $w={12}><Caret /></Slot>
          </FontRow>
          <FontRow>
            <Slot $w={12}><AlignIcon mode="l" /></Slot>
            <Slot $w={6} />
            <Slot $w={20} $on><AlignIcon mode="c" /></Slot>
            <Slot $w={21}><AlignIcon mode="r" /></Slot>
            <Slot $w={21}><AlignIcon mode="j" /></Slot>
          </FontRow>
        </ParaColumn>
        <SmallColumn $top={4} $rowH={20.5}>
          <SmallButton><TextDirIcon />Text Direction<SmallCaret /></SmallButton>
          <SmallButton><AlignTextIcon />Align Text<SmallCaret /></SmallButton>
          <SmallButton><BinocularIcon />Find Text</SmallButton>
        </SmallColumn>
      </GroupBody>
      <GroupLabel $shift={-3}>Paragraph</GroupLabel>
      <Launcher />
    </Group>
    <Group $w={201}>
      <GroupBody $pl={8} $gap={2}>
        <BigButton $w={44}>
          <BigIcon><ArrangeIcon /></BigIcon>
          Arrange
          <BigCaret />
        </BigButton>
        <BigButton $w={39}>
          <BigIcon><QuickStylesIcon /></BigIcon>
          Quick<br />Styles<Caret />
        </BigButton>
        <SmallColumn $top={5} $rowH={19.5}>
          <SmallButton><FillIcon />Shape Fill<SmallCaret /></SmallButton>
          <SmallButton><OutlineIcon />Shape Outline<SmallCaret /></SmallButton>
          <SmallButton><EffectIcon />Shape Effect<SmallCaret /></SmallButton>
        </SmallColumn>
      </GroupBody>
      <GroupLabel>Drawing</GroupLabel>
      <Launcher />
    </Group>
    <Group $w={127}>
      <GroupBody $pl={4}>
        <BigButton $w={38}>
          <BigIcon><PlayerIcon /></BigIcon>
          Player
        </BigButton>
        <BigButton $w={40}>
          <BigIcon><PreviewIcon /></BigIcon>
          Preview
          <BigCaret />
        </BigButton>
        <BigButton $w={42}>
          <BigIcon><PublishIcon /></BigIcon>
          Publish
        </BigButton>
      </GroupBody>
      <GroupLabel>Publish</GroupLabel>
    </Group>
  </Ribbon>
);

const ScenesColumn = () => (
  <ScenesPanel>
    <PanelHead>Scenes<RestoreIcon /></PanelHead>
    <SceneSelect>1 Untitled Scene<SelectCaret /></SceneSelect>
    <Thumb>
      <ThumbTabs>
        {[1, 2, 3, 4, 5].map((n) => <ThumbTab key={n} />)}
      </ThumbTabs>
      <ThumbPage>
        <ThumbText $w={18} />
        <ThumbText $w={24} />
      </ThumbPage>
    </Thumb>
    <ThumbLabel>1.1 Tabs</ThumbLabel>
    <LinkMark><LinkIcon /></LinkMark>
  </ScenesPanel>
);

const SlideStage = () => (
  <Stage>
    <SlideSheet>
      <RotateMark><RotateIcon /></RotateMark>
      <SlideTabs>
        {[1, 2, 3, 4, 5].map((n) => (
          <SlideButton key={n} $first={n === 1}>
            Tab {n}
            {n === 1 && handles.map(([x, y]) => <Handle key={`${x}-${y}`} $x={x} $y={y} />)}
          </SlideButton>
        ))}
      </SlideTabs>
      <SlidePage>
        <SlideStrong>Introduction</SlideStrong>
        This is some sample text
      </SlidePage>
    </SlideSheet>
  </Stage>
);

const TimelinePanel = () => (
  <Timeline>
    <TimelineTabs>
      <TimelineTab $on>Timeline</TimelineTab>
      <TimelineTab>States</TimelineTab>
      <TimelineTab>Notes</TimelineTab>
      <TimelineTools>
        <PanelCaret />
        <RestoreIcon />
      </TimelineTools>
    </TimelineTabs>
    <TimelineBody>
      <TimelineGrid>
        <RulerRow>
          <LayerCols>
            <ToggleBox><EyeIcon /></ToggleBox>
            <LockBox><LockIcon /></LockBox>
          </LayerCols>
          <Ruler>
            {Array.from({ length: 13 }, (_, i) => <RulerMark key={i}>{i + 1}s</RulerMark>)}
            <Playhead />
          </Ruler>
        </RulerRow>
        {layers.map((l, i) => {
          const on = l.name === 'Tab 1';
          return (
            <Row key={l.name} $on={on}>
              <LayerCols>
                <ToggleBox><EyeIcon /></ToggleBox>
                <LockBox />
                <LayerName>{l.name}</LayerName>
              </LayerCols>
              <Track>
                {i === 0 && <EndMark>End</EndMark>}
                <Bar $on={on}>
                  {l.text ? <TextBoxIcon /> : <ShapeIcon bright={on} />}
                  {l.label}
                  <BarArrow $on={on} />
                </Bar>
              </Track>
            </Row>
          );
        })}
        <StubRow><StubBar /></StubRow>
        <TimelineFoot>
          <FootTools><FootIcons /></FootTools>
          <FootTrack />
        </TimelineFoot>
      </TimelineGrid>
      <Scroll $w={18}>
        <ScrollGap $h={20} />
        <ScrollThumb $h={167} />
        <ScrollGap $h={13} />
        <ScrollArrow $h={22} />
        <ScrollEnd />
      </Scroll>
    </TimelineBody>
  </Timeline>
);

const triggerRows = [2, 3, 4];

const RightColumn = () => (
  <RightPanel>
    <TriggersHead>
      Triggers
      <PanelTools><PanelCaret /><RestoreIcon /></PanelTools>
    </TriggersHead>
    <ToolRow>
      <ToolButton><PageIcon /></ToolButton>
      <ToolButton><EditIcon /></ToolButton>
      <ToolButton><DocsIcon /></ToolButton>
      <ToolButton $off><ClipIcon /></ToolButton>
      <ToolButton><TrashIcon /></ToolButton>
      <ToolButton $off><Tri $up /></ToolButton>
      <ToolButton $off><Tri /></ToolButton>
      <ToolButton $push={30}><VarIcon /></ToolButton>
    </ToolRow>
    <TriggerBody>
      <TriggerList>
        <TriggerItem $on>
          Show layer <TriggerLink $on>Tab 1</TriggerLink>
          <TriggerWhen>When the user clicks</TriggerWhen>
        </TriggerItem>
        {triggerRows.map((n) => (
          <React.Fragment key={n}>
            <TriggerGroup><ShapeIcon />Tab {n}</TriggerGroup>
            <TriggerItem>
              Show layer <TriggerLink>Tab {n}</TriggerLink>
              {n < 4 && <TriggerWhen>When the user clicks</TriggerWhen>}
            </TriggerItem>
          </React.Fragment>
        ))}
      </TriggerList>
      <Scroll $w={15}>
        <ScrollArrow $h={17} $up />
        <ScrollGap $h={25} />
        <ScrollThumb $h={70} />
        <ScrollGap $h={71} />
        <ScrollArrow $h={17} />
      </Scroll>
    </TriggerBody>
    <LayersHead>
      Slide Layers
      <PanelTools><PanelCaret /><RestoreIcon /></PanelTools>
    </LayersHead>
    <LayersBody>
      <LayersList>
        {[5, 4, 3, 2, 1].map((n) => (
          <LayerRow key={n}>
            <LayerCheck />
            <OpacityTrack />
            Tab {n}
          </LayerRow>
        ))}
      </LayersList>
      <Scroll $w={16}>
        <ScrollArrow $h={20} $up />
        <ScrollThumb $h={85} />
        <ScrollGap $h={29} />
        <ScrollArrow $h={19} />
        <ScrollEnd />
      </Scroll>
    </LayersBody>
    <LayersFoot>
      <ToolButton><PageIcon /></ToolButton>
      <ToolButton><LayerDupIcon /></ToolButton>
      <ToolButton $off><CopyPlain faint /></ToolButton>
      <ToolButton $off><ClipIcon /></ToolButton>
      <ToolButton $off><TrashIcon faint /></ToolButton>
      <DimCheck><CheckIcon /></DimCheck>
      <DimLabel>Dim</DimLabel>
    </LayersFoot>
  </RightPanel>
);

const WindowsTaskbar = () => (
  <Taskbar>
    <StartSlot><WindowsIcon /></StartSlot>
    <CortanaBox>
      <svg width="20" height="20" viewBox="0 0 20 20">
        <circle cx="10" cy="10" r="7.5" fill="none" stroke="#e0e0e0" strokeWidth="2.4" />
      </svg>
      I'm Cortana. Ask me anything.
    </CortanaBox>
    <TaskSlot $w={46}><TaskViewIcon /></TaskSlot>
    <TaskSlot $w={47}><ChromeIcon /></TaskSlot>
    <TaskSlot $w={47}><EdgeIcon /></TaskSlot>
    <TaskSlot $w={44}><FolderIcon /></TaskSlot>
    <TaskSlot $w={47}><StoreIcon /></TaskSlot>
    <TaskSlot $w={45} $active><AppLogo size={20} /></TaskSlot>
    <Tray>
      <svg width="12" height="7" viewBox="0 0 12 7">
        <path d="M1 6l5-5 5 5" fill="none" stroke="#e8e8e8" strokeWidth="1.2" />
      </svg>
      <NetworkIcon />
      <SpeakerIcon />
      <ChatIcon />
      <Clock>7:59 PM<br />3/1/2016</Clock>
    </Tray>
  </Taskbar>
);

export default function App() {
  return (
    <Shell>
      <GlobalStyle />
      <TitleBar>
        <Qat>
          <AppLogo />
          <QatSlot $w={25} />
          <QatSlot $w={25}><SaveIcon /></QatSlot>
          <QatSlot $w={25}><UndoIcon /></QatSlot>
          <QatSlot $w={26}><RedoIcon /></QatSlot>
          <QatSlot $w={12}><QatMenu /></QatSlot>
        </Qat>
        <DocTitle>Tabs.story*  -  Articulate Storyline 2</DocTitle>
        <ContextHead>DRAWING TOOLS</ContextHead>
        <WinControls>
          <svg width="8" height="8" viewBox="0 0 8 8"><path d="M0 7h8" stroke="#b9bdc2" strokeWidth="1.4" /></svg>
          <svg width="9" height="10" viewBox="0 0 9 10"><path d="M.5 1.5h8v8h-8z" fill="none" stroke="#b9bdc2" /><path d="M0 1h9" stroke="#b9bdc2" strokeWidth="2" /></svg>
          <svg width="9" height="9" viewBox="0 0 9 9"><path d="M1 1l7 7M8 1L1 8" stroke="#b9bdc2" strokeWidth="1.2" /></svg>
        </WinControls>
      </TitleBar>
      <TabsRow>
        <RibbonTab $w={56} $kind="file">FILE</RibbonTab>
        <RibbonTab $w={52} $kind="active">HOME</RibbonTab>
        <RibbonTab $w={62}>INSERT</RibbonTab>
        <RibbonTab $w={60}>DESIGN</RibbonTab>
        <RibbonTab $w={84}>TRANSITIONS</RibbonTab>
        <RibbonTab $w={82}>ANIMATIONS</RibbonTab>
        <RibbonTab $w={56}>VIEW</RibbonTab>
        <RibbonTab $w={52}>HELP</RibbonTab>
        <RibbonTab $w={102} $kind="format">FORMAT</RibbonTab>
        <HelpDot>?</HelpDot>
      </TabsRow>
      <RibbonPanel />
      <DocRow>
        <StoryTab><StoryIcon />STORY VIEW</StoryTab>
        <SlideTab>1.1 Tabs<TabClose>×</TabClose></SlideTab>
        <DocMenu><DocCaret /></DocMenu>
      </DocRow>
      <Main>
        <ScenesColumn />
        <Center>
          <SlideStage />
          <TimelinePanel />
        </Center>
        <RightColumn />
      </Main>
      <WindowsTaskbar />
      <Pointer><PointerIcon /></Pointer>
    </Shell>
  );
}
